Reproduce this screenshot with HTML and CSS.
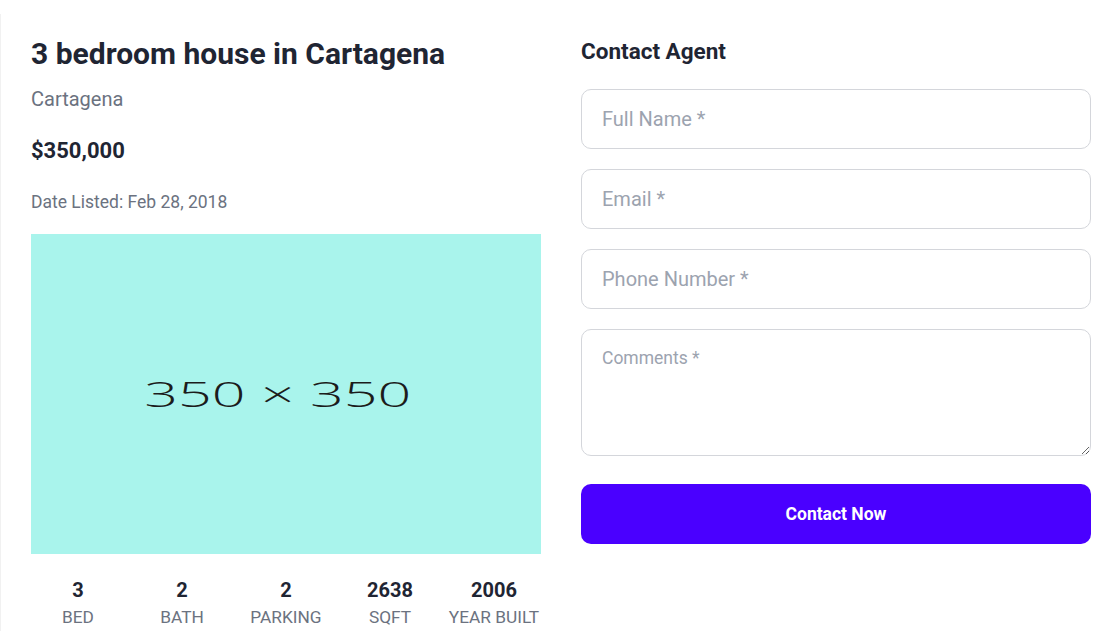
FILE: index.html
```html
<!DOCTYPE html>
<html lang="en">
<head>
<meta charset="utf-8">
<title>3 bedroom house in Cartagena</title>
<link rel="stylesheet" href="styles.css">
</head>
<body>
<div class="page">
  <main class="listing">
    <h1 class="title">3 bedroom house in Cartagena</h1>
    <p class="city">Cartagena</p>
    <p class="price">$350,000</p>
    <p class="date">Date Listed: Feb 28, 2018</p>
    <div class="photo"><span class="photo-label">350 × 350</span></div>
    <ul class="stats">
      <li class="stat"><strong class="stat-value">3</strong><span class="stat-label">BED</span></li>
      <li class="stat"><strong class="stat-value">2</strong><span class="stat-label">BATH</span></li>
      <li class="stat"><strong class="stat-value">2</strong><span class="stat-label">PARKING</span></li>
      <li class="stat"><strong class="stat-value">2638</strong><span class="stat-label">SQFT</span></li>
      <li class="stat"><strong class="stat-value">2006</strong><span class="stat-label">YEAR BUILT</span></li>
    </ul>
  </main>
  <aside class="contact">
    <h2 class="contact-title">Contact Agent</h2>
    <form class="form">
      <input class="field" type="text" placeholder="Full Name *">
      <input class="field" type="email" placeholder="Email *">
      <input class="field" type="tel" placeholder="Phone Number *">
      <textarea class="field field-area" placeholder="Comments *"></textarea>
      <button class="submit" type="button">Contact Now</button>
    </form>
  </aside>
</div>
</body>
</html>
```

FILE: styles.css
```css
* {
  box-sizing: border-box;
}

html, body {
  margin: 0;
  background: #ffffff;
}

body {
  font-family: Roboto, "Liberation Sans", Arial, sans-serif;
  color: #1f2533;
}

.page {
  display: grid;
  grid-template-columns: 510px 510px;
  column-gap: 40px;
  margin-top: 14px;
  padding: 22px 0 0 30px;
  border-left: 1px solid #f1f1f1;
  min-height: 617px;
}

.title {
  margin: 0;
  font-size: 30px;
  line-height: 36px;
  font-weight: 700;
  color: #1f2533;
}

.city {
  margin: 13px 0 0;
  font-size: 20px;
  line-height: 28px;
  color: #6b7280;
}

.price {
  margin: 24px 0 0;
  font-size: 22px;
  line-height: 28px;
  font-weight: 700;
  color: #1f2533;
}

.date {
  margin: 25px 0 0;
  font-size: 17.5px;
  line-height: 24px;
  color: #6b7280;
}

.photo {
  margin-top: 20px;
  height: 320px;
  background: #a9f4ec;
  display: flex;
  align-items: center;
  justify-content: center;
  overflow: hidden;
}

.photo-label {
  display: inline-block;
  font-family: "Open Sans", "DejaVu Sans", sans-serif;
  font-weight: 300;
  font-size: 34px;
  line-height: 1;
  color: #1c1c1c;
  transform: translateX(-8px) scaleX(1.74);
}

.stats {
  list-style: none;
  margin: 23px 0 0;
  padding: 0;
  display: grid;
  grid-template-columns: repeat(5, 1fr);
  column-gap: 10px;
}

.stat {
  display: flex;
  flex-direction: column;
  align-items: center;
  text-align: center;
  white-space: nowrap;
}

.stat-value {
  font-size: 20px;
  line-height: 26px;
  font-weight: 700;
  color: #1f2533;
}

.stat-label {
  margin-top: 2px;
  font-size: 17.3px;
  line-height: 24px;
  color: #6b7280;
}

.contact-title {
  margin: 1px 0 0;
  font-size: 22.5px;
  line-height: 28px;
  font-weight: 700;
  color: #1f2533;
}

.form {
  margin-top: 24px;
  display: flex;
  flex-direction: column;
  gap: 20px;
}

.field {
  display: block;
  width: 100%;
  height: 60px;
  margin: 0;
  padding: 0 20px;
  border: 1px solid #d4d6db;
  border-radius: 10px;
  background: #ffffff;
  font-family: Roboto, "Liberation Sans", Arial, sans-serif;
  font-size: 20px;
  color: #1f2533;
  outline: none;
}

.field::placeholder {
  color: #9ca3af;
  opacity: 1;
}

.field-area {
  height: 127px;
  padding: 15px 20px;
  font-size: 17.5px;
  line-height: 27px;
  resize: vertical;
}

.submit {
  margin-top: 8px;
  height: 60px;
  border: none;
  border-radius: 10px;
  background: #4a00ff;
  color: #ffffff;
  font-family: Roboto, "Liberation Sans", Arial, sans-serif;
  font-size: 17.5px;
  font-weight: 700;
  cursor: pointer;
}
```
